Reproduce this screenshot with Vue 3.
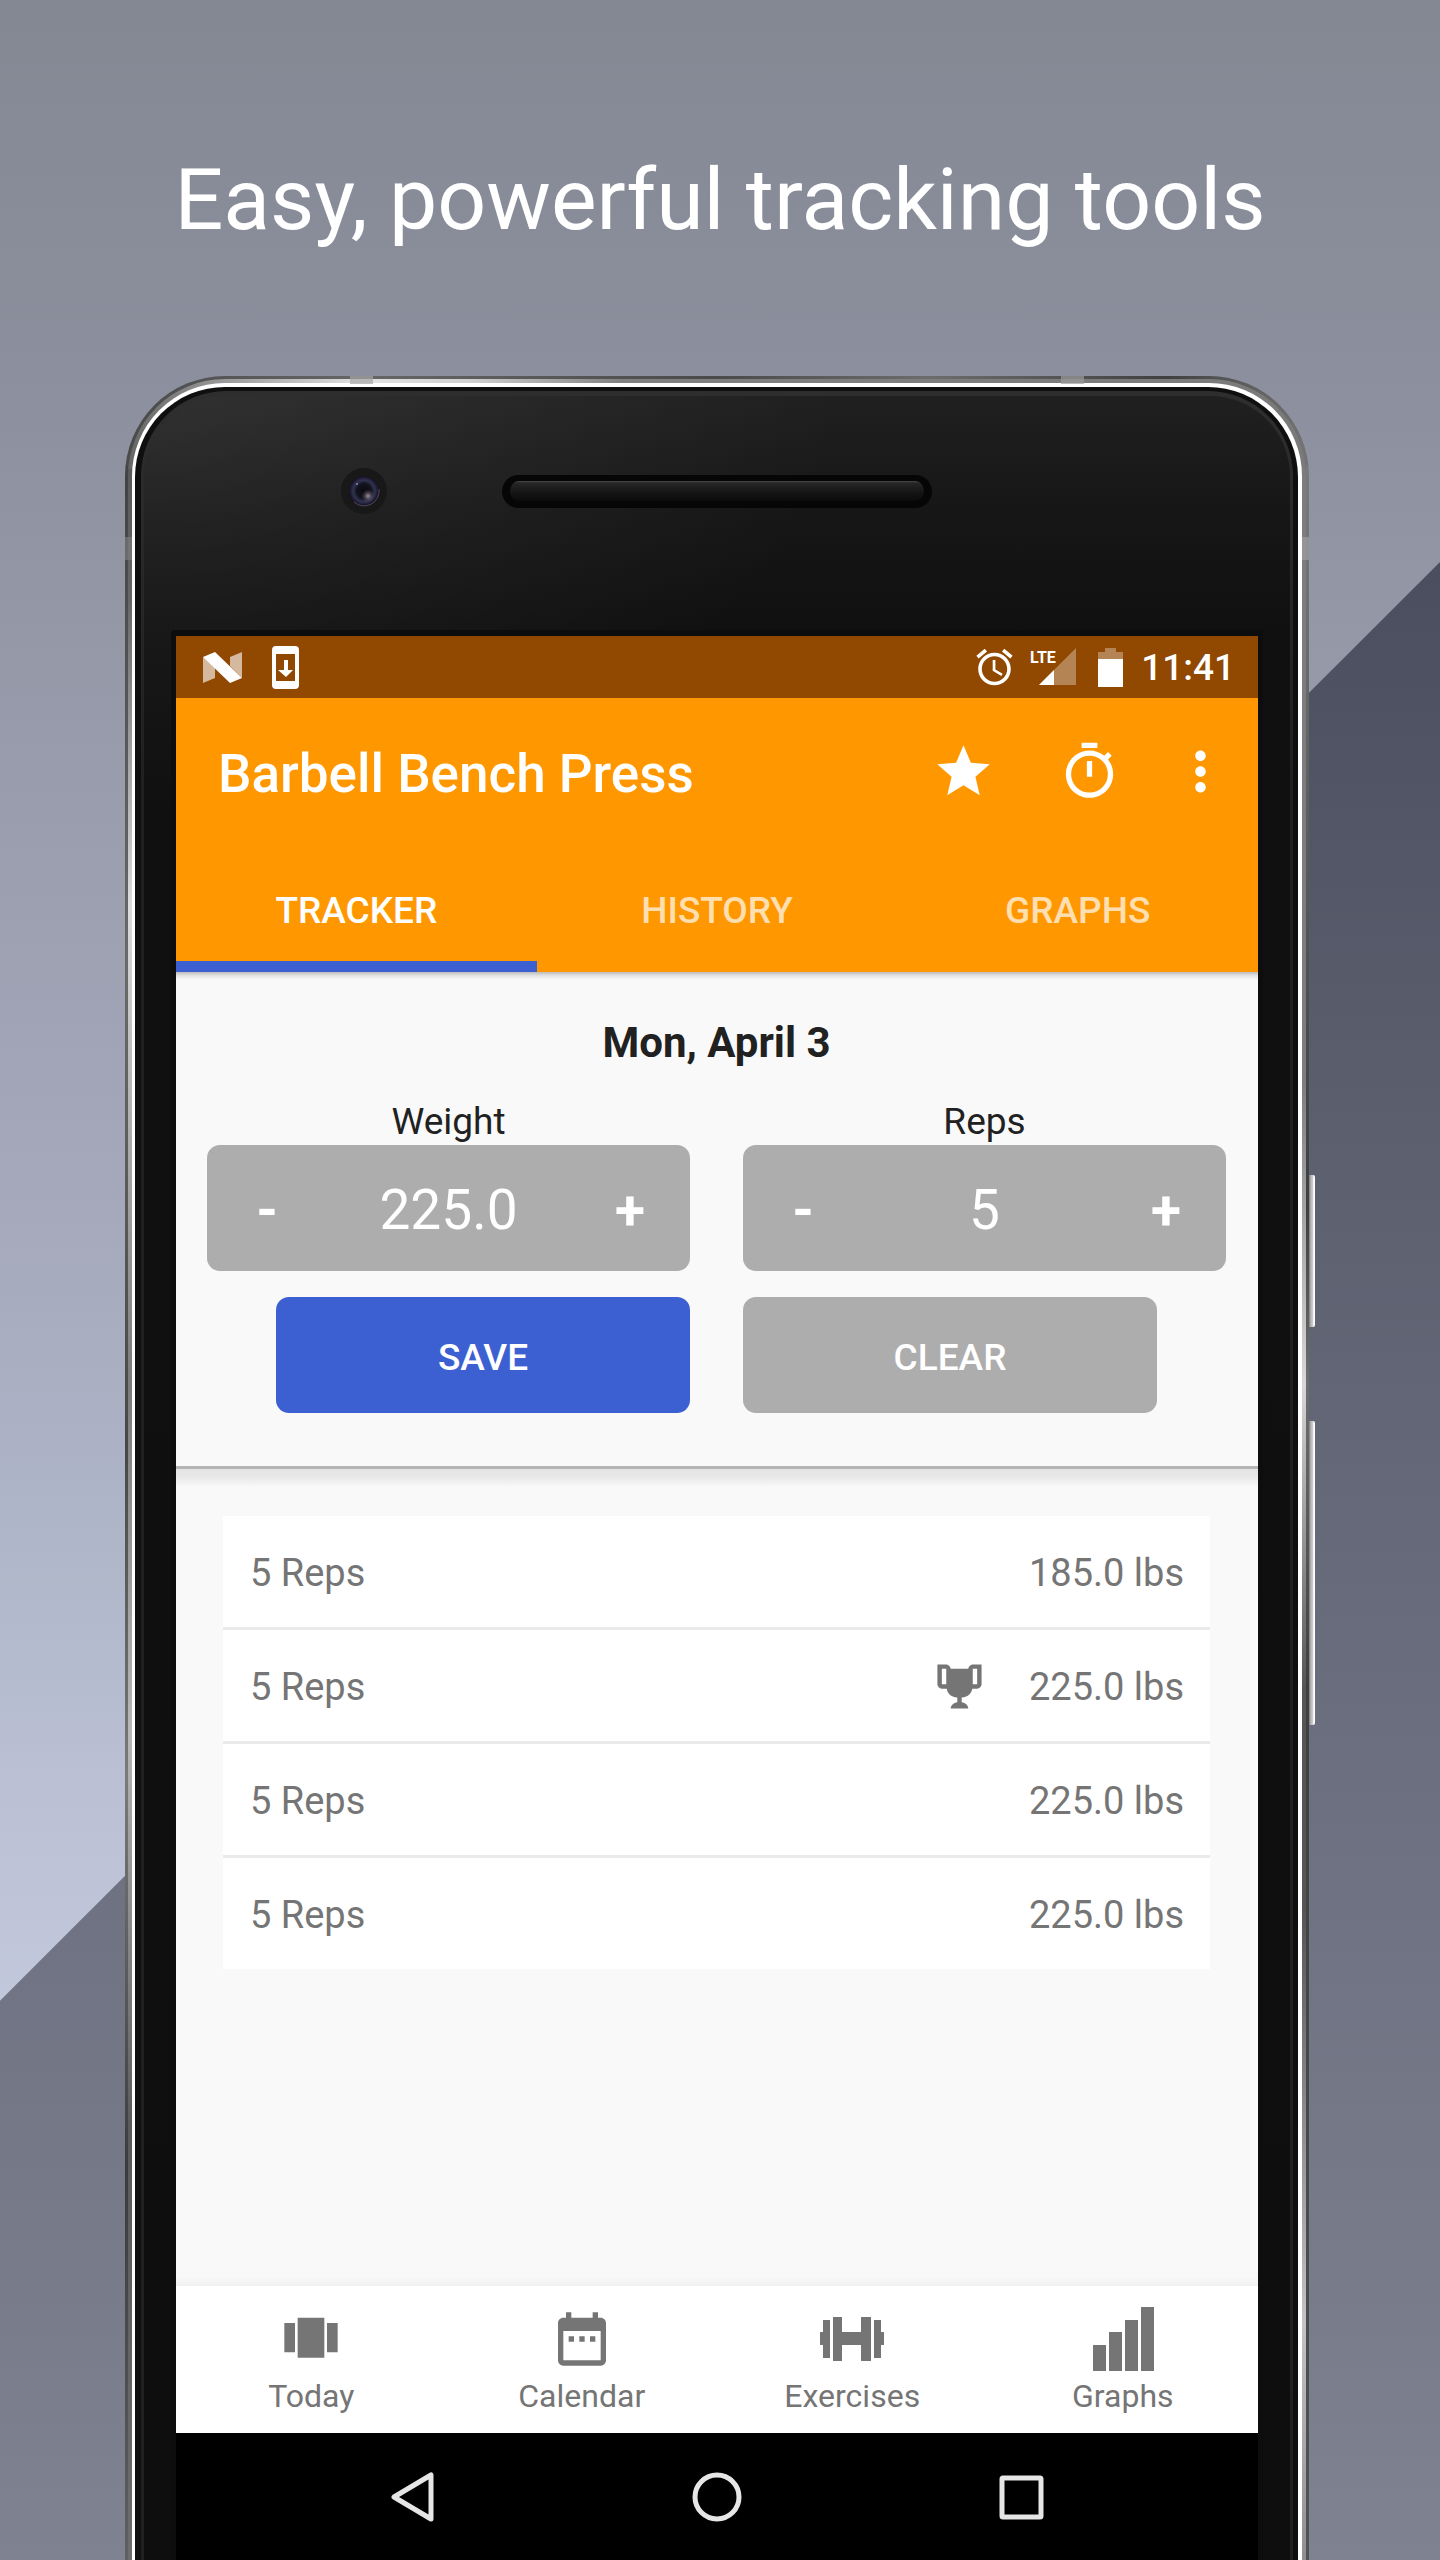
<script setup>
import { ref } from 'vue'

const tabs = ['TRACKER', 'HISTORY', 'GRAPHS']
const activeTab = ref('TRACKER')

const weight = ref('225.0')
const reps = ref('5')

const sets = ref([
  { reps: '5 Reps', weight: '185.0 lbs', record: false },
  { reps: '5 Reps', weight: '225.0 lbs', record: true },
  { reps: '5 Reps', weight: '225.0 lbs', record: false },
  { reps: '5 Reps', weight: '225.0 lbs', record: false },
])

function stepWeight(delta) {
  weight.value = Math.max(0, Number(weight.value) + delta).toFixed(1)
}

function stepReps(delta) {
  reps.value = String(Math.max(0, Number(reps.value) + delta))
}

function save() {
  sets.value.push({ reps: `${reps.value} Reps`, weight: `${weight.value} lbs`, record: false })
}

function clear() {
  weight.value = ''
  reps.value = ''
}
</script>

<template>
  <main class="stage">
    <h1 class="headline">Easy, powerful tracking tools</h1>

    <div class="phone">
      <span class="antenna top-left"></span>
      <span class="antenna top-right"></span>
      <span class="antenna side-left"></span>
      <span class="antenna side-right"></span>
      <span class="side-button power"></span>
      <span class="side-button volume"></span>

      <div class="rim">
        <div class="chamfer">
          <div class="bezel">
            <div class="ring">
              <div class="face">
                <div class="head">
                  <svg class="camera" viewBox="0 0 46 46" aria-hidden="true">
                    <defs>
                      <radialGradient id="lens" cx="0.5" cy="0.5" r="0.5">
                        <stop offset="0" stop-color="#08080d" />
                        <stop offset="0.5" stop-color="#141420" />
                        <stop offset="0.72" stop-color="#303450" />
                        <stop offset="1" stop-color="#150d22" />
                      </radialGradient>
                      <radialGradient id="glint">
                        <stop offset="0" stop-color="#a093a0" />
                        <stop offset="1" stop-color="#3a3340" stop-opacity="0" />
                      </radialGradient>
                    </defs>
                    <circle cx="23" cy="23" r="23" fill="#181818" />
                    <circle cx="23" cy="23" r="15" fill="url(#lens)" />
                    <path d="M13 34a15 15 0 0 0 25-13" fill="none" stroke="#51465c" stroke-width="1" />
                    <circle cx="27" cy="28" r="7" fill="url(#glint)" />
                    <circle cx="16" cy="16" r="1" fill="#8390a8" />
                  </svg>
                  <div class="speaker"></div>
                </div>

                <div class="screen">
                  <div class="status">
                    <svg width="39" height="31" viewBox="0 0 39 31" aria-hidden="true">
                      <path d="M0 5v26l12-5V14zM27 14V5l12-5v26z" fill="#fff" opacity="0.62" />
                      <path d="M0 5 12 0l27 26-12 5z" fill="#fff" />
                    </svg>
                    <svg width="27" height="43" viewBox="0 0 27 43" aria-hidden="true">
                      <path
                        d="M4 0h19a4 4 0 0 1 4 4v35a4 4 0 0 1-4 4H4a4 4 0 0 1-4-4V4a4 4 0 0 1 4-4zM4 8v27h19V8z"
                        fill="#fff"
                        fill-rule="evenodd"
                      />
                      <path d="M12 14h4v10h5l-7 7-8-7h6z" fill="#fff" />
                    </svg>
                    <span class="grow"></span>
                    <svg class="alarm" width="37" height="38" viewBox="1.8 1.6 20.4 20.6" aria-label="Alarm set">
                      <path
                        fill="#fff"
                        d="M22 5.72l-4.6-3.86-1.29 1.53 4.6 3.86L22 5.72zM7.88 3.39L6.6 1.86 2 5.71l1.29 1.53 4.59-3.85zM12.5 8H11v6l4.75 2.85.75-1.23-4-2.37V8zM12 4c-4.97 0-9 4.03-9 9s4.02 9 9 9c4.97 0 9-4.03 9-9s-4.03-9-9-9zm0 16c-3.87 0-7-3.13-7-7s3.13-7 7-7 7 3.13 7 7-3.13 7-7 7z"
                      />
                    </svg>
                    <svg class="signal" width="46" height="38" viewBox="0 0 46 38">
                      <path d="M46 0v37H9z" fill="#fff" opacity="0.33" />
                      <path d="M24 22v15H9z" fill="#fff" />
                      <text x="0" y="15" class="lte">LTE</text>
                    </svg>
                    <svg class="battery" width="25" height="39" viewBox="0 0 25 39" aria-label="Battery">
                      <path d="M7 0h11v4h7v7H0V4h7z" fill="#fff" opacity="0.33" />
                      <path d="M0 11h25v28H0z" fill="#fff" />
                    </svg>
                    <span class="clock">11:41</span>
                  </div>

                  <header class="app-header">
                    <div class="toolbar">
                      <h2 class="title">Barbell Bench Press</h2>
                      <button class="icon-button" type="button" aria-label="Favourite">
                        <svg viewBox="0 0 24 24">
                          <path
                            d="M12 17.27L18.18 21l-1.64-7.03L22 9.24l-7.19-.61L12 2 9.19 8.63 2 9.24l5.46 4.73L5.82 21z"
                          />
                        </svg>
                      </button>
                      <button class="icon-button" type="button" aria-label="Timer">
                        <svg viewBox="0 0 24 24">
                          <path
                            d="M15 1H9v2h6V1zm-4 13h2V8h-2v6zm8.03-6.61l1.42-1.42c-.43-.51-.9-.99-1.41-1.41l-1.42 1.42C16.07 4.74 14.12 4 12 4c-4.97 0-9 4.03-9 9s4.02 9 9 9 9-4.03 9-9c0-2.12-.74-4.07-1.97-5.61zM12 20c-3.87 0-7-3.13-7-7s3.13-7 7-7 7 3.13 7 7-3.13 7-7 7z"
                          />
                        </svg>
                      </button>
                      <button class="icon-button more" type="button" aria-label="More options">
                        <svg viewBox="0 0 24 24">
                          <path
                            d="M12 8c1.1 0 2-.9 2-2s-.9-2-2-2-2 .9-2 2 .9 2 2 2zm0 2c-1.1 0-2 .9-2 2s.9 2 2 2 2-.9 2-2-.9-2-2-2zm0 6c-1.1 0-2 .9-2 2s.9 2 2 2 2-.9 2-2-.9-2-2-2z"
                          />
                        </svg>
                      </button>
                    </div>
                    <div class="tabs" role="tablist">
                      <button
                        v-for="tab in tabs"
                        :key="tab"
                        type="button"
                        role="tab"
                        class="tab"
                        :class="{ active: tab === activeTab }"
                        :aria-selected="tab === activeTab"
                        @click="activeTab = tab"
                      >
                        {{ tab }}
                      </button>
                    </div>
                  </header>

                  <form class="entry" @submit.prevent="save">
                    <h3 class="date">Mon, April 3</h3>
                    <div class="fields">
                      <div class="field">
                        <label for="weight">Weight</label>
                        <div class="stepper">
                          <button type="button" aria-label="Less weight" @click="stepWeight(-5)">-</button>
                          <input id="weight" v-model="weight" type="text" inputmode="decimal" />
                          <button type="button" aria-label="More weight" @click="stepWeight(5)">+</button>
                        </div>
                      </div>
                      <div class="field">
                        <label for="reps">Reps</label>
                        <div class="stepper">
                          <button type="button" aria-label="Fewer reps" @click="stepReps(-1)">-</button>
                          <input id="reps" v-model="reps" type="text" inputmode="numeric" />
                          <button type="button" aria-label="More reps" @click="stepReps(1)">+</button>
                        </div>
                      </div>
                    </div>
                    <div class="actions">
                      <button class="action save" type="submit">SAVE</button>
                      <button class="action" type="button" @click="clear">CLEAR</button>
                    </div>
                  </form>

                  <section class="log">
                    <ul class="sets">
                      <li v-for="(set, i) in sets" :key="i" class="set">
                        <span class="reps">{{ set.reps }}</span>
                        <svg v-if="set.record" class="trophy" viewBox="0 0 24 24" aria-label="Personal record">
                          <path
                            d="M20.2 2H18c-.9 0-2 1-2 2H8c0-1-1.1-2-2-2H2v9c0 1 1 2 2 2h2.2c.4 2 1.7 3.7 4.8 4v2.08C8 19.54 8 22 8 22h8s0-2.46-3-2.92V17c3.1-.3 4.4-2 4.8-4H20c1 0 2-1 2-2V2zM4 11V4h2v7zm16 0h-2V4h2z"
                          />
                        </svg>
                        <span>{{ set.weight }}</span>
                      </li>
                    </ul>
                  </section>

                  <nav class="bottom-nav">
                    <a href="#today" class="nav-item">
                      <svg viewBox="0 0 24 24"><path d="M7 19h10V4H7v15zm-5-2h4V6H2v11zM18 6v11h4V6h-4z" /></svg>
                      Today
                    </a>
                    <a href="#calendar" class="nav-item">
                      <svg viewBox="0 0 24 24">
                        <path
                          d="M9 11H7v2h2v-2zm4 0h-2v2h2v-2zm4 0h-2v2h2v-2zm2-7h-1V2h-2v2H8V2H6v2H5c-1.11 0-1.99.9-1.99 2L3 20c0 1.1.89 2 2 2h14c1.1 0 2-.9 2-2V6c0-1.1-.9-2-2-2zm0 16H5V9h14v11z"
                        />
                      </svg>
                      Calendar
                    </a>
                    <a href="#exercises" class="nav-item">
                      <svg viewBox="0 0 64 64">
                        <path
                          d="M0 25h3V13h7v38H3V38H0zM13 10h9v15h19V10h10v44H41V38H22v16h-9zM54 13h7v12h3v13h-3v13h-7z"
                        />
                      </svg>
                      Exercises
                    </a>
                    <a href="#graphs" class="nav-item">
                      <svg viewBox="0 0 64 64">
                        <path d="M2 38h13v26H2zM18 25h13v39H18zM34 13h13v51H34zM50 0h13v64H50z" />
                      </svg>
                      Graphs
                    </a>
                  </nav>

                  <div class="system-nav">
                    <button type="button" aria-label="Back">
                      <svg viewBox="0 0 50 50">
                        <path d="M43 3v44L6 25z" />
                      </svg>
                    </button>
                    <button type="button" aria-label="Home">
                      <svg viewBox="0 0 50 50"><circle cx="25" cy="25" r="22" /></svg>
                    </button>
                    <button type="button" aria-label="Overview">
                      <svg viewBox="0 0 50 50"><rect x="6" y="6" width="39" height="39" rx="1" /></svg>
                    </button>
                  </div>
                </div>
              </div>
            </div>
          </div>
        </div>
      </div>
    </div>
  </main>
</template>

<style>
body {
  margin: 0;
}
</style>

<style scoped>
*,
*::before {
  box-sizing: border-box;
}

button,
input {
  margin: 0;
  padding: 0;
  border: 0;
  background: none;
  color: inherit;
  font: inherit;
}

button {
  cursor: pointer;
}

.grow {
  flex: 1;
}

.stage {
  position: relative;
  display: flex;
  flex-direction: column;
  min-height: 100vh;
  padding: 0 131px 0 125px;
  overflow: hidden;
  background: linear-gradient(#848893 0%, #8c909e 15%, #9498a7 25%, #a7abbe 50%, #b0b8ca 62%, #babfd4 69%, #c3c9dd 79%);
  font-family: Roboto, 'Noto Sans', sans-serif;
}

.stage::before {
  content: '';
  position: absolute;
  inset: 0;
  background: linear-gradient(#4b4e5e 22%, #5b5e6d 43%, #6b6f7f 69%, #7f8290 100%);
  clip-path: polygon(0 78.15%, 100% 21.95%, 100% 100%, 0 100%);
}

.headline {
  position: relative;
  margin: 0;
  padding: 148px 0 124px 6px;
  color: #fff;
  font-size: 86px;
  font-weight: 400;
  line-height: 104px;
  text-align: center;
  white-space: nowrap;
}

/* Handset shell, drawn as nested layers from the outer edge inwards */
.phone {
  position: relative;
  display: flex;
  flex: 1;
  padding: 3px 3px 0;
  border-radius: 100px 100px 0 0;
  background:
    linear-gradient(#424242 0%, #6a6a6a 23%, #474747 45%, #7a7a7a 60%, #3b3b3e 78%, #68686a 100%) left 90px / 3px 100% no-repeat,
    linear-gradient(#7a7a7a 0%, #4a4a4a 27%, #3f3f3f 34%, #6f6f6f 42%, #3f3f3f 56%, #555 100%) right 90px / 3px 100% no-repeat,
    linear-gradient(to right, #4a4a4a, #666 20%, #4a4a4a 50%, #6c6c6c 68%, #404040 88%, #747474);
}

.rim,
.chamfer,
.bezel,
.ring,
.face {
  display: flex;
  flex: 1;
  min-width: 0;
}

.rim {
  padding: 4px 4px 0;
  border-radius: 97px 97px 0 0;
  background:
    linear-gradient(#5a5a5a 0%, #666 6%, #dcdcdc 20%, #7b7b7b 42%, #b8b8b8 58%, #5a5a5a 76%, #707070 100%) left 90px / 4px 100% no-repeat,
    linear-gradient(#7d7d7d 0%, #7d7d7d 28%, #d8d8d8 42%, #555 56%, #555 66%, #c4c4c4 85%, #858585 98%) right 90px / 4px 100% no-repeat,
    linear-gradient(to right, #666, #999 8%, #e2e2e2 20%, #d0d0d0 29%, #808080 42%, #7a7a7a);
}

.chamfer {
  padding: 4px 4px 0 3px;
  border-radius: 93px 93px 0 0;
  background: #fff;
}

.bezel {
  padding: 4px 5px 0 6px;
  border-radius: 90px 90px 0 0;
  background: #0f0f0f;
}

.ring {
  padding: 5px 3px 0;
  border-radius: 85px 85px 0 0;
  background: linear-gradient(#2e2e2e, #202020 400px);
}

.face {
  flex-direction: column;
  padding: 0 32px;
  border-radius: 80px 80px 0 0;
  background:
    radial-gradient(ellipse 700px 420px at 0 0, rgba(255, 255, 255, 0.08), rgba(255, 255, 255, 0)),
    linear-gradient(#202020, #161616 120px, #101010 240px, #0e0e0e);
}

.head {
  display: grid;
  grid-template-columns: 1fr 430px 1fr;
  align-items: center;
  height: 234px;
  padding-bottom: 44px;
}

.camera {
  justify-self: end;
  width: 46px;
  height: 46px;
  margin-right: 115px;
}

.speaker {
  height: 33px;
  border: solid #060606;
  border-width: 6px 8px 7px;
  border-radius: 17px;
  background: linear-gradient(#484848, #262626 2px, #141414 12px, #0b0b0b);
}

.antenna {
  position: absolute;
  z-index: 1;
  background: rgba(165, 165, 165, 0.7);
}

.top-left,
.top-right {
  top: 0;
  width: 23px;
  height: 8px;
}

.top-left {
  left: 19%;
}

.top-right {
  right: 19%;
  background: rgba(155, 155, 155, 0.7);
}

.side-left,
.side-right {
  top: 161px;
  width: 7px;
  height: 23px;
  background: rgba(130, 130, 130, 0.6);
}

.side-left {
  left: 0;
}

.side-right {
  right: 0;
  background: rgba(160, 160, 160, 0.7);
}

.side-button {
  position: absolute;
  left: 100%;
  width: 6px;
  border-radius: 0 2px 2px 0;
  background: linear-gradient(to right, #777, #b5b5b5 30%, #ccc 60%, #fff 80%);
}

.power {
  top: 799px;
  height: 152px;
}

.volume {
  top: 1045px;
  height: 304px;
}

/* Screen */
.screen {
  display: flex;
  flex: 1;
  flex-direction: column;
  margin: 0 -5px;
  border: solid #0d0d0d;
  border-width: 6px 5px 0;
  border-radius: 4px 4px 0 0;
  background: #f9f9f9;
}

.status {
  display: flex;
  align-items: center;
  height: 62px;
  padding: 0 23px 0 27px;
  background: #914800;
  color: #fff;
}

.status svg + svg {
  margin-left: 30px;
}

.status .signal {
  margin-left: 17px;
}

.status .battery {
  margin-left: 22px;
}

.lte {
  fill: #fff;
  font-size: 16px;
  font-weight: 700;
}

.clock {
  margin-left: 18px;
  padding-top: 2px;
  font-size: 37px;
  font-weight: 500;
  line-height: 44px;
}

.app-header {
  background: #ff9800;
  color: #fff;
}

.toolbar {
  display: flex;
  align-items: center;
  height: 147px;
  padding: 0 26px 0 42px;
}

.title {
  flex: 1;
  margin: 0;
  padding-top: 4px;
  font-size: 53px;
  font-weight: 500;
  line-height: 64px;
}

.icon-button {
  width: 63px;
  height: 63px;
  margin-left: 63px;
}

.icon-button.more {
  margin-left: 48px;
}

.icon-button svg {
  display: block;
  fill: #fff;
}

.tabs {
  display: flex;
}

.tab {
  flex: 1;
  height: 127px;
  padding-top: 4px;
  color: rgba(255, 255, 255, 0.7);
  font-size: 37px;
  font-weight: 500;
}

.tab.active {
  box-shadow: inset 0 -11px #3c60d1;
  color: #fff;
}

.entry {
  padding: 46px 32px 53px 31px;
  border-bottom: 3px solid #b4b4b4;
  background: linear-gradient(#bdbdbd, #e6e6e6 4px, #f9f9f9 8px);
}

.date {
  margin: 0 0 31px;
  color: #212121;
  font-size: 42px;
  font-weight: 700;
  line-height: 50px;
  text-align: center;
}

.fields,
.actions {
  display: flex;
  gap: 53px;
}

.field {
  flex: 1;
  min-width: 0;
}

.field label {
  display: block;
  color: #212121;
  font-size: 37px;
  line-height: 46px;
  text-align: center;
}

.stepper {
  display: flex;
  height: 126px;
  border-radius: 13px;
  background: #adadad;
  color: #fff;
}

.stepper button {
  width: 120px;
  padding-top: 4px;
  font-size: 55px;
  font-weight: 700;
}

.stepper input {
  flex: 1;
  min-width: 0;
  padding-top: 4px;
  font-size: 55px;
  text-align: center;
}

.actions {
  margin-top: 26px;
  padding: 0 69px;
}

.action {
  flex: 1;
  height: 116px;
  padding-top: 4px;
  border-radius: 13px;
  background: #adadad;
  color: #fff;
  font-size: 37px;
  font-weight: 500;
}

.action.save {
  background: #3c60d1;
}

.log {
  flex: 1;
  padding: 47px 48px 47px 47px;
  background:
    linear-gradient(#e4e4e4, #e8e8e8 8px, #f9f9f9 18px) top / 100% 18px no-repeat,
    linear-gradient(#f9f9f9, #f1f1f1) bottom / 100% 10px no-repeat,
    #f9f9f9;
}

.sets {
  margin: 0;
  padding: 0;
  background: #fff;
  list-style: none;
}

.set {
  display: flex;
  align-items: center;
  height: 111px;
  padding: 2px 26px 0 27px;
  color: #757575;
  font-size: 38px;
}

.set + .set {
  height: 114px;
  border-top: 3px solid #eaeaea;
}

.reps {
  flex: 1;
}

.trophy {
  width: 53px;
  height: 53px;
  margin-right: 43px;
  fill: #757575;
}

.bottom-nav {
  display: flex;
  padding: 21px 0 17px;
  background: #fff;
}

.nav-item {
  display: flex;
  flex: 1;
  flex-direction: column;
  align-items: center;
  gap: 5px;
  color: #757575;
  font-size: 32px;
  line-height: 40px;
  text-decoration: none;
}

.nav-item svg {
  width: 64px;
  height: 64px;
  fill: #757575;
}

.system-nav {
  display: flex;
  align-items: center;
  justify-content: center;
  gap: 254px;
  height: 127px;
  background: #000;
}

.system-nav svg {
  display: block;
  width: 50px;
  height: 50px;
  fill: none;
  stroke: #e6e6e6;
  stroke-linejoin: round;
  stroke-width: 5;
}
</style>
